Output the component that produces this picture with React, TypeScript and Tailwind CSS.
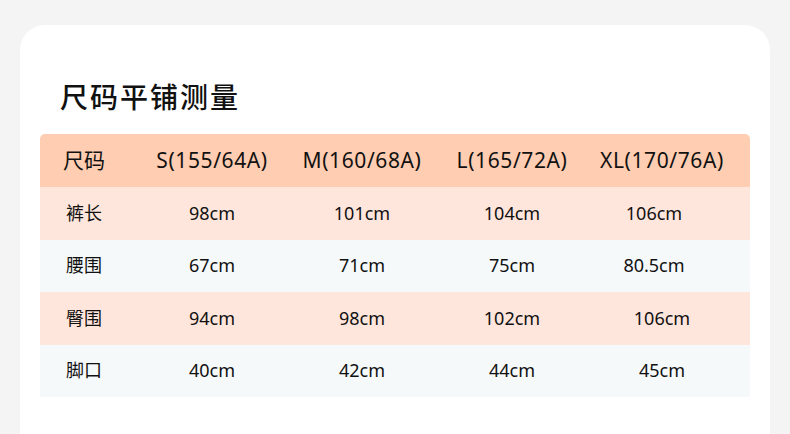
const HEAD = ["尺码", "S(155/64A)", "M(160/68A)", "L(165/72A)", "XL(170/76A)"]

const ROWS = [
  { name: "裤长", values: ["98cm", "101cm", "104cm", "106cm"], bg: "bg-[#ffe6dc]", lastShift: true },
  { name: "腰围", values: ["67cm", "71cm", "75cm", "80.5cm"], bg: "bg-[#f5f9fa]", lastShift: true },
  { name: "臀围", values: ["94cm", "98cm", "102cm", "106cm"], bg: "bg-[#ffe6dc]", lastShift: false },
  { name: "脚口", values: ["40cm", "42cm", "44cm", "45cm"], bg: "bg-[#f5f9fa]", lastShift: false },
]

const cols = "grid grid-cols-[97px_150px_150px_150px_150px] pr-[13px]"

export default function App() {
  return (
    <div
      className="h-[434px] w-[790px] overflow-hidden bg-[#f4f4f4] pt-[25px] px-[20px] text-[#111111]"
      style={{ fontFamily: '"Noto Sans", "Noto Sans CJK SC", sans-serif' }}
    >
      <div className="h-[409px] rounded-t-[25px] bg-white px-[20px] pt-[52px]">
        {/* Title */}
        <h1 className="pl-[20px] text-[28px] leading-[40px] font-medium tracking-[2px]">
          尺码平铺测量
        </h1>

        {/* Table */}
        <div className="mt-[17px]">
          <div className={`${cols} h-[53px] items-center rounded-t-[5px] bg-[#ffcdb1] text-[21px] tracking-[0.6px]`}>
            {HEAD.map((h, i) => (
              <div key={h} className={i === 0 ? "pl-[23px] tracking-normal" : "text-center"}>
                {h}
              </div>
            ))}
          </div>
          {ROWS.map((row) => (
            <div key={row.name} className={`${cols} h-[52.5px] items-center ${row.bg} text-[18px]`}>
              <div className="pl-[26px]">{row.name}</div>
              {row.values.map((v, i) => (
                <div key={i} className={i === 3 && row.lastShift ? "pr-[16px] text-center" : "text-center"}>
                  {v}
                </div>
              ))}
            </div>
          ))}
        </div>
      </div>
    </div>
  )
}
